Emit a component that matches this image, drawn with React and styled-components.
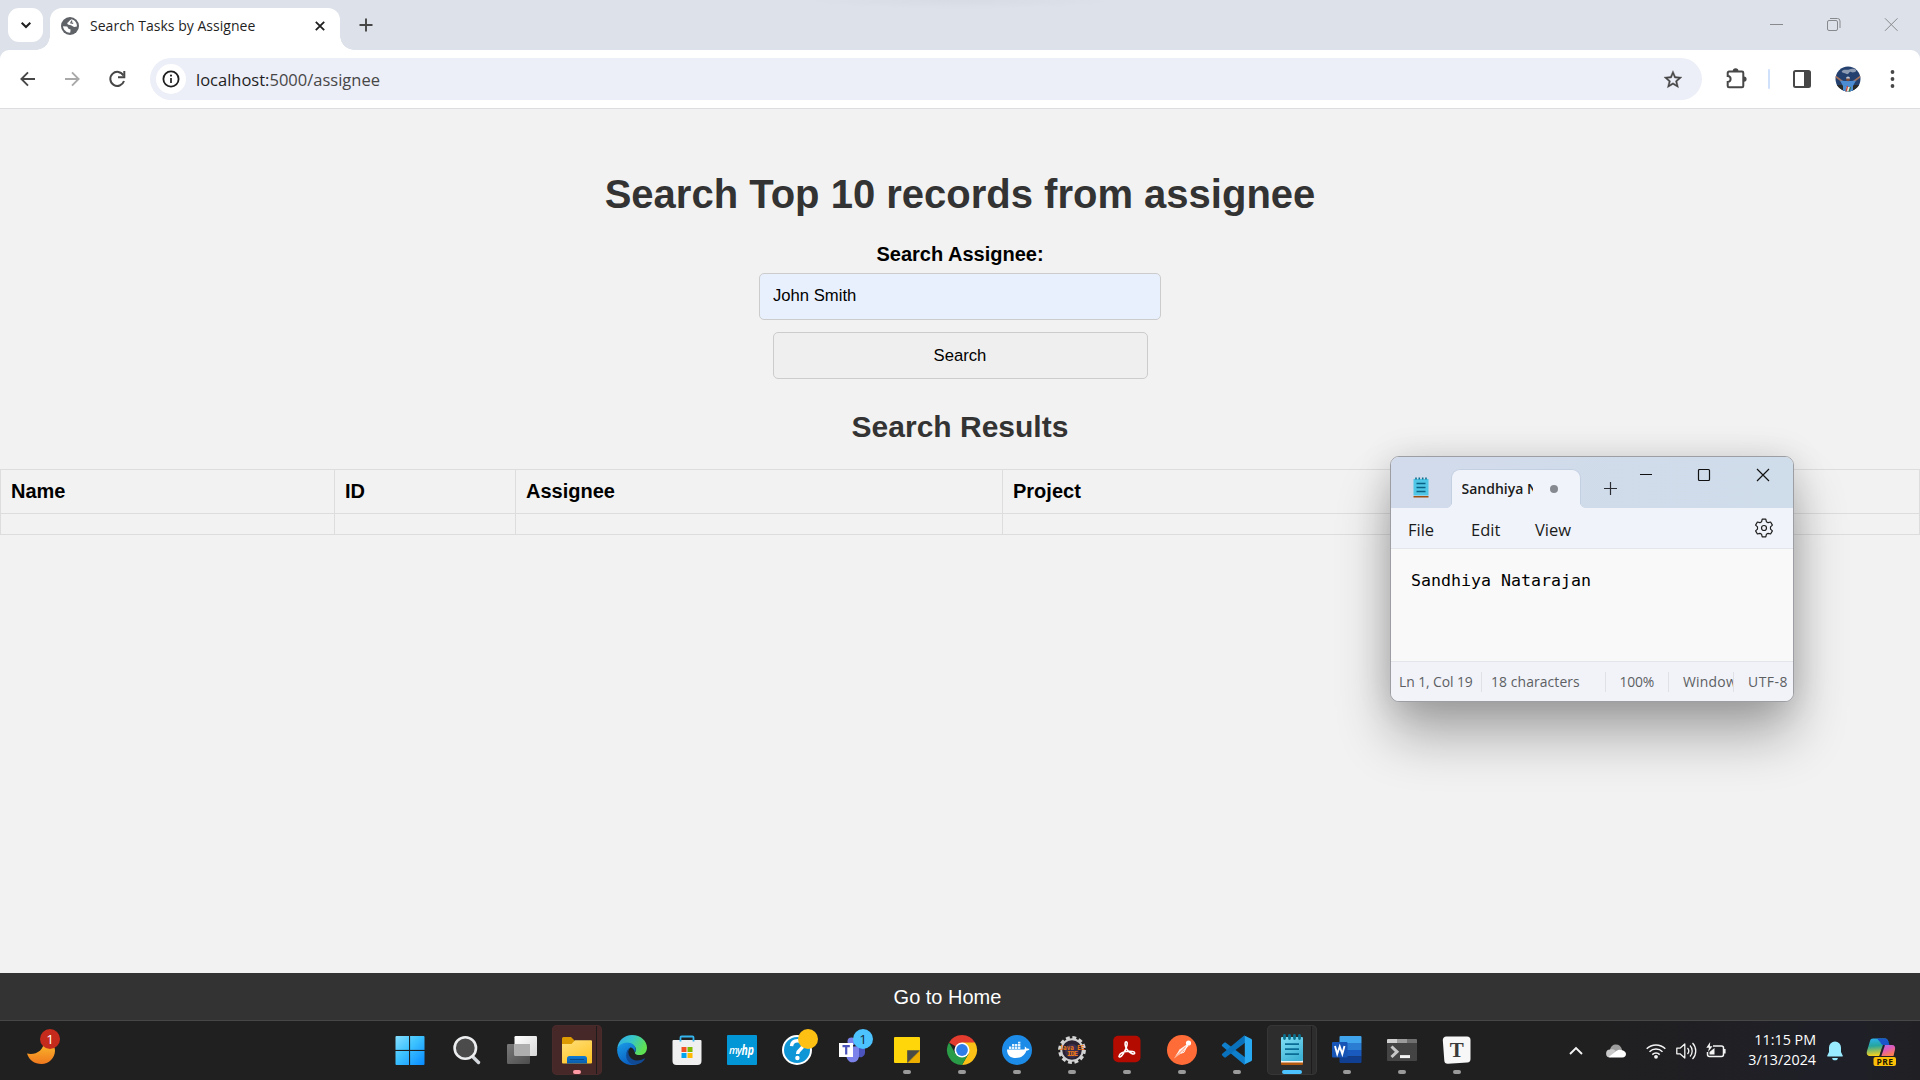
import React from "react";
import styled, { createGlobalStyle, css } from "styled-components";

const GlobalStyle = createGlobalStyle`
  * { box-sizing: border-box; }
  html, body { margin: 0; padding: 0; }
  body { width: 1920px; height: 1080px; overflow: hidden; background: #f2f2f2; }
  svg { display: block; overflow: visible; flex: none; }
`;

const uiFont = css`
  font-family: "Open Sans", "Noto Sans", sans-serif;
`;

const Screen = styled.div`
  position: relative;
  display: flex;
  flex-direction: column;
  width: 1920px;
  height: 1080px;
  overflow: hidden;
  background: #f2f2f2;
`;

/* ---------- Browser ---------- */

const TabStrip = styled.div`
  ${uiFont}
  display: flex;
  align-items: flex-start;
  flex: none;
  height: 50px;
  padding: 8px 0 0 8px;
  background: radial-gradient(ellipse 160px 9px at 960px 0, #d7dbe3, #dde1e9 100%) #dde1e9;
`;

const TabSearch = styled.div`
  display: flex;
  align-items: center;
  justify-content: center;
  width: 35px;
  height: 34px;
  border-radius: 11px;
  background: #fff;
`;

const Tab = styled.div`
  position: relative;
  display: flex;
  align-items: center;
  width: 290px;
  height: 42px;
  margin-left: 7px;
  padding: 0 15px 7px 11px;
  border-radius: 12px 12px 0 0;
  background: #fff;

  &::before,
  &::after {
    content: "";
    position: absolute;
    bottom: 0;
    width: 14px;
    height: 14px;
  }
  &::before {
    left: -14px;
    background: radial-gradient(circle at 0 0, transparent 13.5px, #fff 14px);
  }
  &::after {
    right: -14px;
    background: radial-gradient(circle at 100% 0, transparent 13.5px, #fff 14px);
  }
`;

const TabTitle = styled.span`
  flex: 1;
  padding-left: 11px;
  font-size: 14px;
  line-height: 20px;
  letter-spacing: 0.03px;
  color: #1f1f1f;
  white-space: nowrap;
`;

const NewTab = styled.div`
  margin: 10px 0 0 18.5px;
`;

const WindowControls = styled.div`
  display: flex;
  gap: 42px;
  margin-left: auto;
  padding: 8px 20px 0 0;
`;

const ToolbarBack = styled.div`
  flex: none;
  height: 59px;
  background: #dde1e9;
`;

const Toolbar = styled.div`
  display: flex;
  align-items: center;
  height: 59px;
  padding: 0 11px 1px 12px;
  border-bottom: 1px solid #dcdde0;
  border-radius: 9px 9px 0 0;
  background: #fff;
`;

const ToolButton = styled.div`
  display: flex;
  align-items: center;
  justify-content: center;
  flex: none;
  width: 32px;
  height: 32px;
  margin-left: ${(p) => p.$gap || 0}px;
`;

const Omnibox = styled.div`
  ${uiFont}
  display: flex;
  align-items: center;
  flex: 1;
  height: 42px;
  margin-left: 17px;
  padding: 0 13px 0 6px;
  border-radius: 21px;
  background: #eceef8;
`;

const SiteInfo = styled.div`
  display: flex;
  align-items: center;
  justify-content: center;
  width: 30px;
  height: 30px;
  border-radius: 50%;
  background: #fff;
`;

const Url = styled.span`
  flex: 1;
  padding: 2px 0 0 10px;
  font-size: 16.5px;
  line-height: 22px;
  color: #474747;
  b { font-weight: 400; color: #1f1f1f; }
`;

const ToolDivider = styled.div`
  width: 2px;
  height: 20px;
  margin-left: 16px;
  border-radius: 1px;
  background: #d0e1fc;
`;

/* ---------- Page ---------- */

const Page = styled.main`
  display: flex;
  flex-direction: column;
  flex: 1;
  min-height: 0;
  align-items: center;
  padding-top: 62px;
  background: #f2f2f2;
  font-family: "Liberation Sans", Arial, sans-serif;
  color: #000;
`;

const Title = styled.h1`
  margin: 0;
  font-size: 40px;
  line-height: 46px;
  color: #333;
`;

const Form = styled.form`
  display: flex;
  flex-direction: column;
  align-items: center;
  margin-top: 26px;
`;

const Label = styled.label`
  font-size: 20px;
  line-height: 23px;
  font-weight: 700;
`;

const Field = styled.input`
  width: 402px;
  height: 47px;
  margin: 7px 0 0;
  padding: 0 12px 2px 13px;
  border: 1px solid #ccc;
  border-radius: 5px;
  background: #e8f0fe;
  color: #000;
  font: 16.67px "Liberation Sans", Arial, sans-serif;
`;

const Submit = styled.button`
  width: 375px;
  height: 47px;
  margin: 12px 0 0;
  padding: 1px 0 0;
  border: 1px solid #ccc;
  border-radius: 5px;
  background: #efefef;
  color: #000;
  font: 16.67px "Liberation Sans", Arial, sans-serif;
`;

const Subtitle = styled.h2`
  margin: 31px 0 0;
  font-size: 30px;
  line-height: 34px;
  color: #333;
`;

const Results = styled.div`
  display: grid;
  grid-template-columns: 334px 181px 487px 486px 1fr;
  align-self: stretch;
  margin-top: 25px;
  border: 1px solid #ddd;
  border-width: 1px 1px 0 0;
`;

const Cell = styled.div`
  height: ${(p) => (p.$head ? 44 : 21)}px;
  padding: 10px;
  border: 1px solid #ddd;
  border-width: 0 0 1px 1px;
  font-size: 20px;
  line-height: 23px;
  font-weight: 700;
`;

const Footer = styled.footer`
  flex: none;
  height: 47px;
  background: #333;
  color: #fff;
  font: 20px/48px "Liberation Sans", Arial, sans-serif;
  text-align: center;
  padding-right: 25px;
`;

/* ---------- Notepad ---------- */

const NotepadWindow = styled.section`
  ${uiFont}
  position: absolute;
  left: 1390px;
  top: 456px;
  display: flex;
  flex-direction: column;
  width: 404px;
  height: 246px;
  border: 1px solid #9c9ea3;
  border-radius: 9px;
  background: #f9f9f9;
  overflow: hidden;
`;

const NotepadShadow = styled.div`
  position: absolute;
  left: 1391px;
  top: 457px;
  width: 402px;
  height: 244px;
  border-radius: 9px;
  box-shadow: 0 34px 54px rgba(0, 0, 0, 0.31), 0 2px 36px rgba(0, 0, 0, 0.14);
`;

const NoteTitleBar = styled.div`
  display: flex;
  flex: none;
  height: 51px;
  padding-left: 20.5px;
  background: linear-gradient(90deg, #d2dbeb, #cfdcea);
`;

const NoteIcon = styled.div`
  width: 20px;
  padding-top: 20px;
`;

const NoteTab = styled.div`
  position: relative;
  display: flex;
  align-items: center;
  width: 130px;
  height: 39px;
  margin: 12px 0 0 19px;
  padding: 0 22px 0 10px;
  border: 1px solid #c3d0e2;
  border-bottom: 0;
  border-radius: 9px 9px 0 0;
  background: #f0f3f9;

  &::before,
  &::after {
    content: "";
    position: absolute;
    bottom: 0;
    width: 5px;
    height: 5px;
  }
  &::before { left: -5px; background: radial-gradient(circle at 0 0, transparent 4.5px, #f0f3f9 5px); }
  &::after { right: -5px; background: radial-gradient(circle at 100% 0, transparent 4.5px, #f0f3f9 5px); }
`;

const NoteTabText = styled.span`
  width: 72px;
  overflow: hidden;
  white-space: nowrap;
  font-size: 14px;
  line-height: 20px;
  font-weight: 600;
  color: #1b1b1b;
`;

const Modified = styled.i`
  width: 8px;
  height: 8px;
  margin-left: 16.5px;
  flex: none;
  border-radius: 50%;
  background: #868a90;
`;

const NoteAdd = styled.div`
  padding: 25px 0 0 23.5px;
`;

const NoteControls = styled.div`
  display: flex;
  margin-left: auto;
  padding: 12px 24px 0 0;
  svg + svg { margin-left: 46px; }
  svg:last-child { margin-left: 47px; }
`;

const NoteMenu = styled.div`
  display: flex;
  align-items: center;
  flex: none;
  height: 41px;
  padding: 0 19px 0 17px;
  border-bottom: 1px solid #e2e5ea;
  background: #f0f3f9;
  font-size: 16.5px;
  line-height: 22px;
  color: #1b1b1b;
`;

const MenuItem = styled.span`
  width: ${(p) => p.$w}px;
  padding-top: 3px;
`;

const NoteBody = styled.div`
  flex: 1;
  padding: 20px 20px 0;
  font: 16.61px/24px "DejaVu Sans Mono", "Liberation Mono", monospace;
  color: #000;
  white-space: nowrap;
`;

const NoteStatus = styled.div`
  display: flex;
  align-items: center;
  flex: none;
  height: 40px;
  padding-left: 8px;
  border-top: 1px solid #e2e5ea;
  background: #f1f3f9;
  color: #5d5f63;
  font-size: 13.9px;
  line-height: 20px;
`;

const StatusItem = styled.span`
  width: ${(p) => p.$w}px;
  height: 20px;
  padding-left: ${(p) => p.$pad || 0}px;
  border-right: ${(p) => (p.$last ? "0" : "1px solid #dfe1e6")};
  letter-spacing: ${(p) => p.$track || 0}px;
  overflow: hidden;
  white-space: nowrap;
`;

/* ---------- Taskbar ---------- */

const Taskbar = styled.nav`
  ${uiFont}
  display: flex;
  flex: none;
  height: 60px;
  border-top: 1px solid #474747;
  background: linear-gradient(90deg, #202020 0 82%, #1f1f28 96%, #202024);
  color: #fff;
`;

const Widgets = styled.div`
  width: 384px;
  padding: 6px 0 0 26px;
`;

const Slot = styled.div`
  display: flex;
  flex-direction: column;
  align-items: center;
  width: 55px;
  height: 59px;
  padding-top: 14px;
  padding-right: ${(p) => p.$shift || 0}px;
`;

const Tile = styled.div`
  display: flex;
  flex-direction: column;
  align-items: center;
  width: 50px;
  height: 50px;
  margin-top: -10px;
  padding-top: 10px;
  border-radius: 5px;
  background: linear-gradient(90deg, ${(p) => p.$bg} 0 44px, #1d1b1b 44px 45px, ${(p) => p.$bg} 45px);
  box-shadow: inset 0 0 0 1px ${(p) => p.$edge};
`;

const Indicator = styled.i`
  width: ${(p) => p.$w || 8}px;
  height: 4px;
  margin-top: 5px;
  flex: none;
  border-radius: 2px;
  background: ${(p) => p.$color || "#9a9a9a"};
`;

const Tray = styled.div`
  display: flex;
  align-items: center;
  flex: none;
  margin-left: auto;
  padding-right: 11px;
`;

const TrayIcon = styled.div`
  display: flex;
  align-items: center;
  justify-content: center;
  width: ${(p) => p.$w}px;
`;

const Clock = styled.div`
  width: 84px;
  padding: 0 0 1px;
  text-align: right;
  font-size: 14.3px;
  line-height: 20px;
  white-space: nowrap;
`;

/* ---------- Icons ---------- */

const stroke = (color, width) => ({ fill: "none", stroke: color, strokeWidth: width });

const Globe = () => (
  <svg width="18" height="18" viewBox="0 0 18 18">
    <circle cx="9" cy="9" r="9" fill="#5f6368" />
    <path d="M2 9.2 6.2 9.6 7.5 11.8 9.6 12.4 9.3 15.6C6.3 16 2.2 13.2 2 9.2Z" fill="#fff" />
    <path d="M10.6 2.2C8 3.4 7.8 5.4 6.4 5.8c-.6 1.2.6 2 2.4 2.2 1.7.1 2.5 1.5 4.6 1.9l2.5-.4C16.200 6 14 3 10.600 2.200Z" fill="#fff" />
    <path d="M11 3.600 9.800 5.800 12.200 6.400" {...stroke("#5f6368", 1.2)} />
  </svg>
);

const Avatar = () => (
  <svg width="26" height="26" viewBox="0 0 26 26">
    <defs>
      <clipPath id="avatarClip"><circle cx="13" cy="13" r="12.5" /></clipPath>
    </defs>
    <g clipPath="url(#avatarClip)">
      <rect width="26" height="26" fill="#24406f" />
      <rect y="19" width="26" height="7" fill="#2b2b27" />
      <path d="M7 5c2-2.500 5-.5 7-1.500s6-1.500 7 .5-3 3-5 2-2 3.500-5 1.800-5-.8-4-2.800Z" fill="#8c9ab2" />
      <path d="M0 10 8 16M26 10 18 16" {...stroke("#a4705a", 1.600)} />
      <path d="M5 14.500 10 15h6l5-.5-3 5.500v6H8v-6Z" fill="#4b8cd2" />
      <circle cx="13" cy="13.300" r="1.900" fill="#7a4c3c" />
      <path d="M11 12.600a2 2 0 0 1 4 0Z" fill="#c3cbd8" />
      <path d="M11.500 21h4l-1.500 5h-3Z" fill="#efe9df" />
      <path d="M12.500 20 11 26" {...stroke("#c8483b", 1.300)} />
      <path d="M15.500 21 14 26" {...stroke("#3a7a48", 1.300)} />
    </g>
  </svg>
);

const WindowsLogo = () => (
  <svg width="30" height="30" viewBox="0 0 30 30">
    <defs>
      <linearGradient id="win" gradientUnits="userSpaceOnUse" x1="0" y1="0" x2="29" y2="29">
        <stop offset="0" stopColor="#8be0ff" /><stop offset=".45" stopColor="#3fc4ff" /><stop offset="1" stopColor="#0a8dff" />
      </linearGradient>
    </defs>
    <path fill="url(#win)" d="M.5 2A1 1 0 0 1 1.500 1H14v14H.5ZM15 1h13.500a1 1 0 0 1 1 1v13H15ZM.5 16H14v14H1.500a1 1 0 0 1-1-1ZM15 16h14.500v13a1 1 0 0 1-1 1H15Z" />
    <path d="M0 15.400H30M14.600 0V30" stroke="#202020" strokeWidth="1" />
  </svg>
);

const SearchIcon = () => (
  <svg width="30" height="30" viewBox="0 0 30 30">
    <path d="M20 21 26.500 27.500" stroke="#d4d7db" strokeWidth="3.400" strokeLinecap="round" />
    <circle cx="13.300" cy="13" r="10.700" fill="#4b4b4b" stroke="#eceef0" strokeWidth="2.600" />
  </svg>
);

const TaskView = () => (
  <svg width="30" height="30" viewBox="0 0 30 30">
    <defs>
      <linearGradient id="tv1" x2="1" y2="1"><stop stopColor="#fff" /><stop offset="1" stopColor="#d8d8d8" /></linearGradient>
      <linearGradient id="tv2" x2="1" y2="1"><stop stopColor="#7a7a7a" /><stop offset="1" stopColor="#4c4c4c" /></linearGradient>
    </defs>
    <rect x="0" y="9" width="23" height="20" rx="1.200" fill="url(#tv2)" />
    <rect x="7.500" y="1" width="22.500" height="20" rx="1.200" fill="url(#tv1)" />
    <path d="M7.500 9H23V21H8.500a1 1 0 0 1-1-1Z" fill="#aeaeae" />
  </svg>
);

const Explorer = () => (
  <svg width="30" height="30" viewBox="0 0 30 30">
    <defs>
      <linearGradient id="fold" x2=".6" y2="1"><stop stopColor="#ffe07a" /><stop offset="1" stopColor="#ffc52b" /></linearGradient>
      <linearGradient id="foldb" y2="1" x2="0"><stop stopColor="#0f7bd4" /><stop offset="1" stopColor="#0a5cab" /></linearGradient>
    </defs>
    <path d="M0 3.500A1.500 1.500 0 0 1 1.500 2H9l4 4h4v6H0Z" fill="#dc9b03" />
    <path d="M0 9H9.500L13 5.200H29A1 1 0 0 1 30 6.200V27.500a1 1 0 0 1-1 1H1a1 1 0 0 1-1-1Z" fill="url(#fold)" />
    <path d="M5 28.500V23.500A2.500 2.500 0 0 1 7.500 21h15a2.500 2.500 0 0 1 2.500 2.500v5Z" fill="url(#foldb)" />
    <path d="M8.500 24.500H21.500" stroke="#064a8b" strokeWidth="1.200" strokeLinecap="round" />
  </svg>
);

const Edge = () => (
  <svg width="30" height="30" viewBox="0 0 30 30">
    <defs>
      <linearGradient id="e1" x2="1" y2=".4"><stop stopColor="#2fa7ec" /><stop offset=".5" stopColor="#37c6c9" /><stop offset="1" stopColor="#5fe052" /></linearGradient>
      <linearGradient id="e2" x2=".5" y2="1"><stop stopColor="#1a9de8" /><stop offset="1" stopColor="#0a5fc0" /></linearGradient>
    </defs>
    <path d="M.3 13.500C1 5.500 7.300 0 15 0c9 0 15 6.300 15 12.500 0 4.500-3 7.600-7.200 7.600-3 0-4.900-1-4.900-2.200 0-.8 1.100-1.100 1.100-3.200 0-2.600-2.600-4.900-6.200-4.900C7 9.800 2 11.500.3 13.500Z" fill="url(#e1)" />
    <path d="M.1 14.500C.9 10.500 5.500 7.500 10.500 7.500c4.500 0 8.300 3 8.300 7.300 0 1-.4 2-1 2.800-.2-3-2.300-5-4.600-5-3.700 3.500-3.700 10.200 1 14 1.700 1.400 3.400 2.300 5.400 2.600C11 31.800.1 27 .1 14.500Z" fill="url(#e2)" />
    <path d="M12.600 12.800c-2.500 3.800-1 9 2.400 11.200 4.300 2.600 9 1.500 12.300-.5.500-.3.900.1.600.6-1.900 3-5.100 5-8.600 5.500C13 30.200 9.200 25.500 9.200 20.500c0-3.800 1.500-6.600 3.400-7.700Z" fill="#114a94" />
  </svg>
);

const Store = () => (
  <svg width="30" height="30" viewBox="0 0 30 30">
    <path d="M.5 6a1 1 0 0 1 1-1h27a1 1 0 0 1 1 1V26a4 4 0 0 1-4 4h-21a4 4 0 0 1-4-4Z" fill="#f0f0f0" />
    <path d="M8.500 6.500V2.500a1 1 0 0 1 1-1h11a1 1 0 0 1 1 1V6.500" {...stroke("#35b5ee", 1.800)} />
    <path d="M9.500 12h5v5h-5Z" fill="#f25022" /><path d="M15.500 12h5v5h-5Z" fill="#7fba00" />
    <path d="M9.500 18h5v5h-5Z" fill="#00a4ef" /><path d="M15.500 18h5v5h-5Z" fill="#ffb900" />
  </svg>
);

const MyHp = () => (
  <svg width="30" height="30" viewBox="0 0 30 30">
    <rect width="30" height="30" rx="1" fill="#0296d6" />
    <text x="2" y="18.500" fontFamily="Open Sans, sans-serif" fontSize="10" fontStyle="italic" fontWeight="600" fill="#fff" textLength="13">my</text>
    <text x="14.500" y="19.500" fontFamily="Open Sans, sans-serif" fontSize="14.500" fontStyle="italic" fontWeight="700" fill="#fff" textLength="12.500" lengthAdjust="spacingAndGlyphs">hp</text>
  </svg>
);

const HelpIcon = () => (
  <svg width="30" height="30" viewBox="0 0 30 30">
    <circle cx="15" cy="15" r="14" fill="#0f96d6" stroke="#fff" strokeWidth="2" />
    <path d="M9.500 11.200c.3-3.600 2.800-5.400 6-5.400 3.400 0 5.500 1.900 5.500 4.500 0 4.300-5.400 4-5.400 8.700" {...stroke("#fff", 3.400)} />
    <circle cx="15.400" cy="23" r="2.200" fill="#fff" />
    <circle cx="26" cy="4" r="10" fill="#ffc014" />
  </svg>
);

const Teams = () => (
  <svg width="30" height="30" viewBox="0 0 30 30">
    <circle cx="24" cy="8" r="4" fill="#5059c9" />
    <path d="M18 11.500H28V18a4.500 4.500 0 0 1-7 3.500Z" fill="#4b53bc" />
    <circle cx="14.500" cy="6.500" r="4" fill="#7b83eb" />
    <path d="M9 11.500H22V20a6.200 6.200 0 0 1-12.500 2Z" fill="#7b83eb" />
    <rect x="2" y="8" width="14" height="14" fill="#fff" />
    <path d="M5.500 11.200h7.300M9.200 11V19.500" {...stroke("#4b53bc", 2.200)} />
    <circle cx="26" cy="4" r="10" fill="#4cc2ff" />
    <text x="26" y="9" textAnchor="middle" fontFamily="Open Sans, sans-serif" fontSize="13.500" fill="#152a38">1</text>
  </svg>
);

const Sticky = () => (
  <svg width="30" height="30" viewBox="0 0 30 30">
    <path d="M2 3a1 1 0 0 1 1-1H27a1 1 0 0 1 1 1V15.500L15.500 28H3a1 1 0 0 1-1-1Z" fill="#ffd60a" />
    <path d="M28 15.500V27a1 1 0 0 1-1 1H15.500Z" fill="#eeae00" />
    <path d="M15.200 15.300H28L15.200 28Z" fill="#4a4a46" />
  </svg>
);

const Chrome = () => (
  <svg width="30" height="30" viewBox="0 0 30 30">
    <path d="M15 15 2 7.500A15 15 0 0 1 28 7.500Z" fill="#e33b2e" />
    <path d="M15 7.500H28A15 15 0 0 1 15 30L21.500 18.800Z" fill="#fbc116" />
    <path d="M2 7.500A15 15 0 0 0 15 30L21.500 18.800 8.500 18.800Z" fill="#2a9c47" />
    <circle cx="15" cy="15" r="7.500" fill="#fff" />
    <circle cx="15" cy="15" r="5.900" fill="#2f7de9" />
  </svg>
);

const Docker = () => (
  <svg width="30" height="30" viewBox="0 0 30 30">
    <circle cx="15" cy="15" r="15" fill="#1d8ce8" />
    <path d="M5 14.500H22c.8 0 1.200-1.400.6-3 1.300.4 1.900 1.300 2 2.200 1.200-.3 2.200-.1 2.900.4-.6 1.300-1.800 1.700-3.200 1.700C22.800 20.500 19.200 23 14 23 8.500 23 5 20.500 5 14.500Z" fill="#fff" />
    <path d="M7 11.500h2.400V14H7ZM10 11.500h2.400V14H10ZM13 11.500h2.400V14H13ZM16 11.500h2.400V14H16ZM10 9h2.400v2H10ZM13 9h2.400v2H13ZM16 9h2.400v2H16ZM16 6.800h2.400v1.700H16Z" fill="#fff" opacity=".9" />
  </svg>
);

const JavaEE = () => (
  <svg width="30" height="30" viewBox="0 0 30 30">
    <circle cx="15" cy="15" r="12.300" {...stroke("#d5d5d5", 3.200)} strokeDasharray="3.860 2.580" />
    <circle cx="15" cy="15" r="10.800" fill="#2a2230" stroke="#d0d0d0" strokeWidth="2" />
    <circle cx="15" cy="16" r="7" fill="#3d2f4e" />
    <text x="15" y="14.500" textAnchor="middle" fontFamily="DejaVu Sans Mono, monospace" fontSize="7" fontWeight="700" fill="#f07a17" textLength="25" lengthAdjust="spacingAndGlyphs">Java EE</text>
    <text x="15.500" y="21" textAnchor="middle" fontFamily="DejaVu Sans Mono, monospace" fontSize="7" fontWeight="700" fill="#f07a17" textLength="11">IDE</text>
  </svg>
);

const Acrobat = () => (
  <svg width="30" height="30" viewBox="0 0 30 30">
    <rect x="1.200" y=".8" width="27.300" height="26.500" rx="5" fill="#b30b00" />
    <path d="M7.200 20.500c1.200-2.600 5-3.900 9-4.200 3.300-.2 6.500.4 6.500 1.700 0 2.600-6.300-.5-8.400-4.700-1.500-3.200-1.700-6.300-.2-6.500 2.200-.2.700 5.800-1.600 9.800-1.800 3.500-4.200 6-5.200 5.300-.4-.3-.4-.8-.1-1.400Z" {...stroke("#fff", 1.600)} />
  </svg>
);

const Postman = () => (
  <svg width="30" height="30" viewBox="0 0 30 30">
    <circle cx="15" cy="15" r="15" fill="#ff6c37" />
    <path d="M7 23.500 12.500 14.500 20 9.300 21.600 11 14.500 18Z" fill="#fff" opacity=".9" />
    <path d="M8 22.500 19 11.500" {...stroke("#ff6c37", 0.8)} />
    <path d="M20 10.800l-3 6.400-3 1" {...stroke("#fff", 1)} />
    <circle cx="21.500" cy="8" r="2.600" fill="#fff" />
  </svg>
);

const VsCode = () => (
  <svg width="30" height="30" viewBox="0 0 30 30">
    <path d="M0 9.800 2.200 7.700a1.300 1.300 0 0 1 1.700 0L23 22.300V29.500a2 2 0 0 1-1.500-.6L.2 11.300a1.200 1.200 0 0 1-.2-1.500Z" fill="#0f7fcb" />
    <path d="M0 20.200 2.200 22.300a1.300 1.300 0 0 0 1.700 0L23 7.700V.5a2 2 0 0 0-1.500.6L.2 18.700a1.200 1.200 0 0 0-.2 1.500Z" fill="#0a72bd" />
    <path d="M21.800.3 29 3.700a1.700 1.700 0 0 1 1 1.500V24.800a1.700 1.700 0 0 1-1 1.500L21.800 29.800c1 .2 1-1.300 1-2V2.200c0-.8 0-2-1-1.900Z" fill="#29a9f2" />
  </svg>
);

const NotepadBig = () => (
  <svg width="30" height="30" viewBox="0 0 30 30">
    <defs><linearGradient id="np" x2=".6" y2="1"><stop stopColor="#83dff5" /><stop offset="1" stopColor="#3fb3d6" /></linearGradient></defs>
    <path d="M4 26h22v3a1 1 0 0 1-1 1H5a1 1 0 0 1-1-1Z" fill="#b35a10" />
    <rect x="4" y="25" width="22" height="2.500" fill="#f2f2f2" />
    <rect x="4" y="2" width="22" height="24" rx="1" fill="url(#np)" />
    <path d="M8 9.200H22M8 14.200H22M8 19.200H22" stroke="#0a6c94" strokeWidth="1.800" />
    <path d="M7.500.5v3M12.500.5v3M17.500.5v3M22.500.5v3" stroke="#0d7290" strokeWidth="2.800" strokeLinecap="round" />
  </svg>
);

const Word = () => (
  <svg width="30" height="30" viewBox="0 0 30 30">
    <path d="M7.500 2a1 1 0 0 1 1-1H28.500a1 1 0 0 1 1 1V8H7.500Z" fill="#41a5ee" />
    <path d="M7.500 8h22v7h-22Z" fill="#2b7cd3" />
    <path d="M7.500 15h22v6.500h-22Z" fill="#185abd" />
    <path d="M7.500 21.500h22V27a1 1 0 0 1-1 1H8.500a1 1 0 0 1-1-1Z" fill="#103f91" />
    <rect x="0" y="7" width="15.500" height="15.500" rx="1" fill="#1654b5" />
    <path d="M3 11 5.200 19 7.750 11.500 10.300 19 12.500 11" {...stroke("#fff", 1.900)} />
  </svg>
);

const Terminal = () => (
  <svg width="30" height="30" viewBox="0 0 30 30">
    <path d="M0 5h30V25a1 1 0 0 1-1 1H1a1 1 0 0 1-1-1Z" fill="#444" />
    <path d="M0 5a1 1 0 0 1 1-1h9v4H0Z" fill="#d0d0d0" /><path d="M10 4h10v4H10Z" fill="#9b9b9b" /><path d="M20 4h9a1 1 0 0 1 1 1v3H20Z" fill="#707070" />
    <path d="M4.500 11.500 10 16.800 4.500 22" {...stroke("#c8c8c8", 3)} />
    <path d="M13 21.600H23" stroke="#f4f4f4" strokeWidth="3" />
  </svg>
);

const Typora = () => (
  <svg width="30" height="30" viewBox="0 0 30 30">
    <path d="M4.500 1.500H25a3.500 3.500 0 0 1 3.500 3.500V24a3.500 3.500 0 0 1-3.200 3.500L6 28.700a3.500 3.500 0 0 1-3.700-3.200L.8 5.200A3.500 3.500 0 0 1 4.500 1.500Z" fill="#f7f7f7" />
    <text x="14.800" y="21.500" textAnchor="middle" fontFamily="Liberation Serif, serif" fontWeight="700" fontSize="21" fill="#3a3a3a">T</text>
  </svg>
);

const apps = [
  { Icon: WindowsLogo, shift: 3 },
  { Icon: SearchIcon },
  { Icon: TaskView },
  { Icon: Explorer, tile: "#472829", edge: "#4a2b2c", color: "#ff99a4" },
  { Icon: Edge },
  { Icon: Store },
  { Icon: MyHp },
  { Icon: HelpIcon },
  { Icon: Teams },
  { Icon: Sticky, open: true },
  { Icon: Chrome, open: true },
  { Icon: Docker, open: true },
  { Icon: JavaEE, open: true },
  { Icon: Acrobat, open: true },
  { Icon: Postman, open: true },
  { Icon: VsCode, open: true },
  { Icon: NotepadBig, tile: "#2d2d2d", edge: "#363636", color: "#4cc2ff", w: 20 },
  { Icon: Word, open: true },
  { Icon: Terminal, open: true },
  { Icon: Typora, open: true },
];

const TaskButton = ({ app }) => {
  const { Icon } = app;
  if (app.tile) {
    return (
      <Slot>
        <Tile $bg={app.tile} $edge={app.edge}>
          <Icon />
          <Indicator $color={app.color} $w={app.w} />
        </Tile>
      </Slot>
    );
  }
  return (
    <Slot $shift={app.shift}>
      <Icon />
      {app.open && <Indicator />}
    </Slot>
  );
};

const columns = ["Name", "ID", "Assignee", "Project", ""];

export default function App() {
  return (
    <Screen>
      <GlobalStyle />
      <TabStrip>
        <TabSearch>
          <svg width="12" height="12" viewBox="0 0 12 12"><path d="M1.700 3.700 6 8 10.300 3.700" {...stroke("#1f1f1f", 2)} /></svg>
        </TabSearch>
        <Tab>
          <Globe />
          <TabTitle>Search Tasks by Assignee</TabTitle>
          <svg width="10" height="10" viewBox="0 0 10 10"><path d="M.8.8 9.200 9.200M9.200.8.8 9.200" {...stroke("#1f1f1f", 1.800)} /></svg>
        </Tab>
        <NewTab>
          <svg width="14" height="14" viewBox="0 0 14 14"><path d="M7 .5V13.500M.5 7H13.500" {...stroke("#474747", 1.900)} /></svg>
        </NewTab>
        <WindowControls>
          <svg width="18" height="18" viewBox="0 0 18 18"><path d="M4 8.500H17" {...stroke("#87898d", 1)} /></svg>
          <svg width="16" height="18" viewBox="0 0 16 18">
            <rect x="1.500" y="4.500" width="10" height="10" rx="1.500" {...stroke("#87898d", 1)} />
            <path d="M4 2.500H11.500A2.500 2.500 0 0 1 14 5V12" {...stroke("#87898d", 1)} />
          </svg>
          <svg width="16" height="18" viewBox="0 0 16 18"><path d="M1 2.300 13.500 14.800M13.500 2.300 1 14.800" {...stroke("#87898d", 1)} /></svg>
        </WindowControls>
      </TabStrip>
      <ToolbarBack>
        <Toolbar>
          <ToolButton>
            <svg width="16" height="16" viewBox="0 0 16 16"><path d="M15 8H1.800M8 1.300 1.400 8 8 14.700" {...stroke("#474747", 1.900)} /></svg>
          </ToolButton>
          <ToolButton $gap={12}>
            <svg width="16" height="16" viewBox="0 0 16 16"><path d="M1 8H14.200M8 1.300 14.600 8 8 14.700" {...stroke("#a9a9a9", 1.900)} /></svg>
          </ToolButton>
          <ToolButton $gap={13}>
            <svg width="18" height="18" viewBox="0 0 18 18">
              <path d="M15.400 5.400A7 7 0 1 0 16 11" {...stroke("#474747", 2)} />
              <path d="M16.300 1V7.300H10" {...stroke("#474747", 2)} />
            </svg>
          </ToolButton>
          <Omnibox>
            <SiteInfo>
              <svg width="18" height="18" viewBox="0 0 18 18">
                <circle cx="9" cy="9" r="7.600" {...stroke("#1f1f1f", 1.800)} />
                <path d="M9 8V13" {...stroke("#1f1f1f", 1.700)} />
                <circle cx="9" cy="5.600" r="1.050" fill="#1f1f1f" />
              </svg>
            </SiteInfo>
            <Url><b>localhost:</b>5000/assignee</Url>
            <ToolButton>
              <svg width="20" height="20" viewBox="0 0 24 24">
                <path d="M22 9.240l-7.190-.62L12 2 9.190 8.630 2 9.240l5.460 4.730L5.820 21 12 17.270 18.180 21l-1.630-7.030L22 9.240zM12 15.400l-3.760 2.270 1-4.280-3.320-2.880 4.380-.38L12 6.100l1.710 4.040 4.380.38-3.320 2.880 1 4.280L12 15.400z" fill="#474747" stroke="#474747" strokeWidth=".4" transform="translate(-1 -.2) scale(1.080)" />
              </svg>
            </ToolButton>
          </Omnibox>
          <ToolButton $gap={18}>
            <svg width="21" height="21" viewBox="0 0 21 21">
              <path d="M7 3.600H3A1.300 1.300 0 0 0 1.700 4.900V8C4 8.200 4.600 9.600 4.600 11s-.6 2.800-2.900 3v4A1.300 1.300 0 0 0 3 19.300H16A1.300 1.300 0 0 0 17.300 18V4.900A1.300 1.300 0 0 0 16 3.600Z" {...stroke("#474747", 2)} />
              <path d="M6.800 3a2.800 2.800 0 0 1 5.600 0ZM18 8.500a2.600 2.600 0 0 1 0 5.200Z" fill="#474747" />
            </svg>
          </ToolButton>
          <ToolDivider />
          <ToolButton $gap={16}>
            <svg width="18" height="18" viewBox="0 0 18 18">
              <rect x="1" y="1" width="16" height="16" rx="1.500" {...stroke("#474747", 2)} />
              <path d="M11 1h6v16h-6Z" fill="#474747" />
            </svg>
          </ToolButton>
          <ToolButton $gap={13.5}><Avatar /></ToolButton>
          <ToolButton $gap={13.5}>
            <svg width="4" height="18" viewBox="0 0 4 18" fill="#474747"><circle cx="1.500" cy="2" r="1.900" /><circle cx="1.500" cy="9" r="1.900" /><circle cx="1.500" cy="16" r="1.900" /></svg>
          </ToolButton>
        </Toolbar>
      </ToolbarBack>

      <Page>
        <Title>Search Top 10 records from assignee</Title>
        <Form>
          <Label>Search Assignee:</Label>
          <Field defaultValue="John Smith" />
          <Submit type="button">Search</Submit>
        </Form>
        <Subtitle>Search Results</Subtitle>
        <Results>
          {columns.map((c, i) => <Cell key={i} $head>{c}</Cell>)}
          {columns.map((c, i) => <Cell key={i} />)}
        </Results>
      </Page>
      <Footer>Go to Home</Footer>

      <Taskbar>
        <Widgets>
          <svg width="36" height="40" viewBox="0 0 36 40">
            <defs><linearGradient id="moon" x2="0" y2="1"><stop stopColor="#fbc02d" /><stop offset="1" stopColor="#f0781e" /></linearGradient></defs>
            <path d="M1 26.500C9 28.500 18 24 18 14 24 14 29 18 29 23.500 29 31 23 37 15.500 37 8.500 37 3 33 1 26.500Z" fill="url(#moon)" />
            <circle cx="24" cy="12" r="10" fill="#c42b1c" />
            <text x="24" y="17" textAnchor="middle" fontFamily="Open Sans, sans-serif" fontSize="13.500" fill="#fff">1</text>
          </svg>
        </Widgets>
        {apps.map((app, i) => <TaskButton key={i} app={app} />)}
        <Tray>
          <TrayIcon $w={32}>
            <svg width="14" height="10" viewBox="0 0 14 10"><path d="M1 8 7 2 13 8" {...stroke("#f4f4f4", 1.900)} /></svg>
          </TrayIcon>
          <TrayIcon $w={48}>
            <svg width="20" height="14" viewBox="0 0 20 14">
              <path d="M4 6C4.500 2.500 7 .5 10 .5c3 0 5 1.800 5.800 4.500L17 9 3 10Z" fill="#9d9d9d" />
              <path d="M4.200 5.500C6 5 8 5.500 9.500 6.700L4 13.500A4 4 0 0 1 4.200 5.500Z" fill="#c9c9c9" />
              <path d="M3 12.800 9.500 7.500C12 5.500 14.500 5.500 16 6.300c2.500.4 4 2 4 3.800a3.600 3.600 0 0 1-3.600 3.400H4a3 3 0 0 1-1-.7Z" fill="#fff" />
            </svg>
          </TrayIcon>
          <TrayIcon $w={32}>
            <svg width="20" height="16" viewBox="0 0 20 16">
              <path d="M.7 5.800a13.200 13.200 0 0 1 18.600 0M3.500 8.800a9.200 9.200 0 0 1 13 0M6.300 11.600a5.200 5.200 0 0 1 7.400 0" {...stroke("#f4f4f4", 1.500)} />
              <circle cx="10" cy="13.800" r="1.900" fill="#f4f4f4" />
            </svg>
          </TrayIcon>
          <TrayIcon $w={28}>
            <svg width="20" height="18" viewBox="0 0 20 18">
              <path d="M.8 6.200H4L8.800 2V16L4 11.800H.8Z" {...stroke("#f4f4f4", 1.300)} strokeLinejoin="round" />
              <path d="M11.500 6a4.500 4.500 0 0 1 0 6M14 3.500a8 8 0 0 1 0 11M16.500 1a11.500 11.500 0 0 1 0 16" {...stroke("#f4f4f4", 1.300)} />
            </svg>
          </TrayIcon>
          <TrayIcon $w={32}>
            <svg width="20" height="18" viewBox="0 0 20 18">
              <path d="M7 4H15.500A2 2 0 0 1 17.500 6v6.500a2 2 0 0 1-2 2H3.500a2 2 0 0 1-2-2V10" {...stroke("#f4f4f4", 1.500)} />
              <path d="M18 7h1.600v4.500H18Z" fill="#f4f4f4" />
              <path d="M3.500 12.500V10L8.500 6V12.500Z" fill="#f4f4f4" />
              <path d="M4.200 0 .3 5.800H3L2 10 6.500 4.200H3.800Z" fill="#f4f4f4" />
            </svg>
          </TrayIcon>
          <Clock>11:15 PM<br />3/13/2024</Clock>
          <TrayIcon $w={37}>
            <svg width="16" height="20" viewBox="0 0 16 20">
              <path d="M8 .5A6 6 0 0 1 14 6.500V11l1.800 3.800c.2.500 0 .8-.5.800H.7c-.5 0-.7-.3-.5-.8L2 11V6.500A6 6 0 0 1 8 .5Z" fill="#99ebff" />
              <path d="M5.200 17h5.600a2.800 2.300 0 0 1-5.600 0Z" fill="#99ebff" />
            </svg>
          </TrayIcon>
          <TrayIcon $w={56}>
            <svg width="30" height="30" viewBox="0 0 30 30">
              <defs>
                <linearGradient id="cp1" x2=".1" y2="1"><stop stopColor="#2bb2f0" /><stop offset=".45" stopColor="#25a59f" /><stop offset="1" stopColor="#f4d21f" /></linearGradient>
                <linearGradient id="cp2" x2=".5" y2="1"><stop stopColor="#a46bf0" /><stop offset=".5" stopColor="#e05bb5" /><stop offset="1" stopColor="#fb7d55" /></linearGradient>
              </defs>
              <path d="M7 2.500H19c2 0 2.800 1.300 3.500 3.500L20 9c-2.500 0-3.400 1-4 3L13.500 20H4C1 20 .3 17.500 1 15L4 5C4.500 3.200 5.500 2.500 7 2.500Z" fill="url(#cp1)" />
              <path d="M11 2.500h8c2 0 2.800 1.300 3.500 3.500l1 3H20c-2.500 0-5 .5-5.500-2.500Z" fill="#1a56c9" />
              <path d="M19 9h7c2.500 0 3.500 2 3 4.500L27.500 20H14l2.500-8.500C17 9.700 17.700 9 19 9Z" fill="url(#cp2)" />
              <path d="M18 9 14 21" stroke="#20202a" strokeWidth="2" />
              <rect x="7.500" y="21" width="22.500" height="9" rx="2" fill="#fdc009" />
              <text x="18.800" y="28.500" textAnchor="middle" fontFamily="Open Sans, sans-serif" fontSize="8.500" fontWeight="700" fill="#1a1400" textLength="16.500">PRE</text>
            </svg>
          </TrayIcon>
        </Tray>
      </Taskbar>

      <NotepadShadow />
      <NotepadWindow>
        <NoteTitleBar>
          <NoteIcon>
            <svg width="18" height="21" viewBox="0 0 18 21">
              <path d="M1.500 19h15v1.500h-15Z" fill="#a04d10" />
              <rect x="1.500" y="2" width="15" height="16.500" fill="#4fc6e6" />
              <path d="M4.500 6.500H13.500M4.500 10.500H13.500M4.500 14.500H13.500" stroke="#0a6184" strokeWidth="1.600" />
              <path d="M4 .5v2M7.300.5v2M10.700.5v2M14 .5v2" stroke="#0d6f8f" strokeWidth="1.600" />
            </svg>
          </NoteIcon>
          <NoteTab><NoteTabText>Sandhiya Natarajan</NoteTabText><Modified /></NoteTab>
          <NoteAdd>
            <svg width="13" height="13" viewBox="0 0 13 13"><path d="M6.500 0V13M0 6.500H13" {...stroke("#2a2d31", 1.200)} /></svg>
          </NoteAdd>
          <NoteControls>
            <svg width="12" height="12" viewBox="0 0 12 12"><path d="M0 5.500H12" {...stroke("#111", 1)} /></svg>
            <svg width="12" height="12" viewBox="0 0 12 12"><rect x=".5" y=".5" width="11" height="11" rx="1" {...stroke("#111", 1.200)} /></svg>
            <svg width="12" height="12" viewBox="0 0 12 12"><path d="M0 0 12 12M12 0 0 12" {...stroke("#111", 1.200)} /></svg>
          </NoteControls>
        </NoteTitleBar>
        <NoteMenu>
          <MenuItem $w={63}>File</MenuItem>
          <MenuItem $w={64}>Edit</MenuItem>
          <MenuItem $w={219}>View</MenuItem>
          <svg width="20" height="20" viewBox="0 0 20 20">
            <path d="M8.200 1.200h3.600l.6 2.500 1.700 1 2.500-.7 1.800 3.100-1.900 1.800v2.200l1.900 1.800-1.800 3.100-2.500-.7-1.700 1-.6 2.500H8.200l-.6-2.500-1.700-1-2.500.7-1.800-3.100 1.900-1.800V8.900L1.600 7.100 3.400 4l2.500.7 1.700-1Z" {...stroke("#1f1f1f", 1.200)} strokeLinejoin="round" />
            <circle cx="10" cy="10" r="2.500" {...stroke("#1f1f1f", 1.200)} />
          </svg>
        </NoteMenu>
        <NoteBody>Sandhiya Natarajan</NoteBody>
        <NoteStatus>
          <StatusItem $w={83} $track={-0.08}>Ln 1, Col 19</StatusItem>
          <StatusItem $w={124} $pad={9} $track={0.1}>18 characters</StatusItem>
          <StatusItem $w={63} $pad={13.5} $track={-0.2}>100%</StatusItem>
          <StatusItem $w={65} $pad={14} $track={0.25}>Windows</StatusItem>
          <StatusItem $w={58} $pad={14} $track={0.5} $last>UTF-8</StatusItem>
        </NoteStatus>
      </NotepadWindow>
    </Screen>
  );
}
